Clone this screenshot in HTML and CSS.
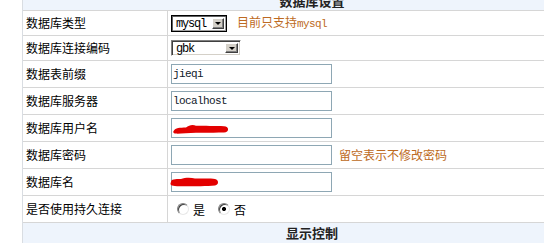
FILE: index.html
```html
<!DOCTYPE html>
<html lang="zh-CN">
<head>
<meta charset="utf-8">
<title>数据库设置</title>
<link rel="stylesheet" href="styles.css">
</head>
<body>
<div class="page">
  <div class="grid">
    <div class="row head"><span>数据库设置</span></div>

    <div class="row r25">
      <div class="lbl">数据库类型</div>
      <div class="val">
        <span class="sel sel-focus w56"><span class="sel-text">mysql</span><span class="sel-btn"><span class="tri"></span></span></span>
        <span class="hint">目前只支持<span class="mono">mysql</span></span>
      </div>
    </div>

    <div class="row r25">
      <div class="lbl">数据库连接编码</div>
      <div class="val">
        <span class="sel w70"><span class="sel-text">gbk</span><span class="sel-btn"><span class="tri"></span></span></span>
      </div>
    </div>

    <div class="row">
      <div class="lbl">数据表前缀</div>
      <div class="val"><span class="inp">jieqi</span></div>
    </div>

    <div class="row">
      <div class="lbl">数据库服务器</div>
      <div class="val"><span class="inp">localhost</span></div>
    </div>

    <div class="row">
      <div class="lbl">数据库用户名</div>
      <div class="val">
        <span class="inp">
          <svg class="blob blob-user" width="58" height="12" viewBox="0 0 58 12">
            <path d="M2,7.5 C3,4.6 8,4.6 14,4.4 C17,2 21,1.2 24,2.8 C32,2.8 44,3 52,3.2 C57.5,3.4 57.5,9.4 52,9.4 C44,9.6 34,9.8 24,9.7 C16,10 8,10.8 4,10.6 C0.8,10.4 0.8,8.5 2,7.5 Z" fill="#e30000"/>
          </svg>
        </span>
      </div>
    </div>

    <div class="row">
      <div class="lbl">数据库密码</div>
      <div class="val">
        <span class="inp"></span>
        <span class="hint hint-pass">留空表示不修改密码</span>
      </div>
    </div>

    <div class="row">
      <div class="lbl">数据库名</div>
      <div class="val">
        <span class="inp">
          <svg class="blob blob-db" width="50" height="12" viewBox="0 0 50 12">
            <path d="M2,6 C2,3 6,3 12,3 C16,1.4 22,1.2 26,2.6 C34,2.4 42,2.2 46,3 C50,3.8 50,9 46,9.4 C38,10 26,10.2 16,10.2 C10,10.4 5,10.4 3,9.6 C1.2,9 1.2,7 2,6 Z" fill="#e30000"/>
          </svg>
        </span>
      </div>
    </div>

    <div class="row">
      <div class="lbl">是否使用持久连接</div>
      <div class="val radios">
        <label class="opt"><span class="radio"></span><span>是</span></label>
        <label class="opt"><span class="radio checked"></span><span>否</span></label>
      </div>
    </div>

    <div class="row head foot"><span>显示控制</span></div>
  </div>
</div>
</body>
</html>
```

FILE: styles.css
```css
html, body {
  margin: 0;
  padding: 0;
  background: #ffffff;
  overflow: hidden;
}

body {
  width: 544px;
  height: 243px;
  font-family: "Noto Sans CJK SC", "Noto Sans", sans-serif;
  font-size: 12px;
  color: #000000;
}

.page {
  padding-left: 22px;
  margin-top: -10px;
}

.grid {
  width: 578px;
  border-left: 1px solid #d9dde2;
  display: flex;
  flex-direction: column;
}

.row {
  box-sizing: border-box;
  height: 27px;
  border-bottom: 1px solid #d6d6d6;
  display: grid;
  grid-template-columns: 145px 1fr;
}

.row.r25 {
  height: 25px;
}

.head {
  height: 21px;
  background: #eef4fc;
  display: flex;
  align-items: center;
  justify-content: center;
  font-weight: bold;
  font-size: 13px;
  color: #222222;
}

.foot {
  height: 24px;
  border-bottom: none;
  padding-bottom: 6px;
}

.lbl {
  box-sizing: border-box;
  border-right: 1px solid #d6d6d6;
  padding-left: 3px;
  display: flex;
  align-items: center;
  line-height: 1;
}

.val {
  padding-left: 3px;
  display: flex;
  align-items: center;
  line-height: 1;
}

.hint {
  color: #bd6a22;
  margin-left: 10px;
  font-size: 12px;
}

.hint-pass {
  margin-left: 7px;
}

.mono {
  font-family: "Liberation Mono", "DejaVu Sans Mono", monospace;
  font-size: 11px;
  letter-spacing: -0.6px;
}

/* text inputs */
.inp {
  position: relative;
  box-sizing: border-box;
  width: 161px;
  height: 20px;
  border: 1px solid #8ea7b4;
  background: #ffffff;
  padding-left: 1px;
  display: flex;
  align-items: center;
  font-family: "Liberation Mono", "DejaVu Sans Mono", monospace;
  font-size: 11px;
  letter-spacing: -0.6px;
  color: #10202a;
}

.blob {
  position: absolute;
  display: block;
}

.blob-user {
  left: 0;
  top: 4px;
}

.blob-db {
  left: -3px;
  top: 3px;
}

/* classic select boxes */
.sel {
  box-sizing: border-box;
  display: flex;
  align-items: center;
  justify-content: space-between;
  height: 16px;
  background: #ffffff;
  border: 1px solid;
  border-color: #808080 #ffffff #ffffff #808080;
  box-shadow: inset 1px 1px 0 #404040, inset -1px -1px 0 #d4d0c8;
  padding: 0 2px 0 4px;
  font-family: "Liberation Mono", "DejaVu Sans Mono", monospace;
  font-size: 12px;
  letter-spacing: -1.2px;
}

.sel-focus {
  height: 17px;
  border: 1px solid #000000;
  box-shadow: inset 1px 1px 0 #606060, inset -1px -1px 0 #a0a0a0;
}

.w56 { width: 56px; }
.w70 { width: 70px; }

.sel-text {
  color: #000000;
  padding-top: 1px;
}

.sel-btn {
  box-sizing: border-box;
  width: 12px;
  height: 11px;
  background: #d4d0c8;
  border: 1px solid;
  border-color: #ffffff #404040 #404040 #ffffff;
  box-shadow: inset -1px -1px 0 #808080;
  display: flex;
  align-items: center;
  justify-content: center;
}

.w70 .sel-btn {
  width: 13px;
  height: 10px;
}

.tri {
  width: 0;
  height: 0;
  border-left: 3px solid transparent;
  border-right: 3px solid transparent;
  border-top: 3px solid #000000;
  margin-top: 1px;
}

/* radios */
.radios {
  padding-left: 9px;
  gap: 13px;
}

.opt {
  display: flex;
  align-items: center;
  gap: 4px;
  padding-top: 2px;
}

.radio {
  box-sizing: border-box;
  width: 12px;
  height: 12px;
  border-radius: 50%;
  border: 1px solid;
  border-color: #808080 #e8e8e8 #e8e8e8 #808080;
  background: #ffffff;
  box-shadow: inset 1px 1px 0 #404040;
  margin-top: -3px;
}

.radio.checked {
  background: radial-gradient(circle at 50% 50%, #000000 0, #000000 1.8px, #ffffff 2.3px);
}
```
